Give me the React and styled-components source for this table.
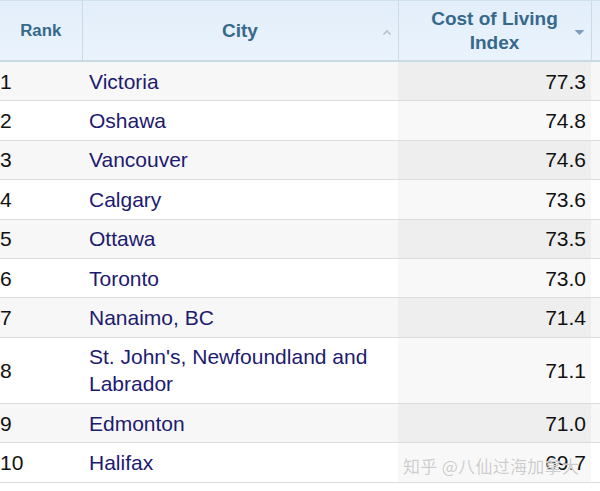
import styled, { createGlobalStyle } from "styled-components";

const GlobalStyle = createGlobalStyle`
  body {
    margin: 0;
    background: #ffffff;
    font-family: "Liberation Sans", Arial, sans-serif;
  }
`;

const rows = [
  { rank: 1, city: "Victoria", index: "77.3" },
  { rank: 2, city: "Oshawa", index: "74.8" },
  { rank: 3, city: "Vancouver", index: "74.6" },
  { rank: 4, city: "Calgary", index: "73.6" },
  { rank: 5, city: "Ottawa", index: "73.5" },
  { rank: 6, city: "Toronto", index: "73.0" },
  { rank: 7, city: "Nanaimo, BC", index: "71.4" },
  { rank: 8, city: "St. John's, Newfoundland and Labrador", index: "71.1" },
  { rank: 9, city: "Edmonton", index: "71.0" },
  { rank: 10, city: "Halifax", index: "69.7" },
];

const Wrapper = styled.div`
  position: relative;
  width: 600px;
  height: 491px;
  overflow: hidden;
`;

const Table = styled.table`
  width: 600px;
  border-collapse: collapse;
  table-layout: fixed;
`;

const HeadCell = styled.th`
  position: relative;
  height: 59px;
  padding: 0 6px;
  border-top: 1px solid #cfe0ee;
  border-bottom: 2px solid #cbd9e5;
  border-left: 1px solid #c8dbea;
  background: linear-gradient(#e2eefa, #eaf3fc);
  color: #37698b;
  font-size: ${(p) => (p.$small ? "16.8px" : "19px")};
  line-height: 24px;
  font-weight: bold;
  text-align: center;
  &:first-child {
    border-left: none;
  }
`;

const SortIcon = styled.svg`
  position: absolute;
  right: ${(p) => p.$right}px;
  top: 28px;
`;

const Row = styled.tr`
  background: ${(p) => (p.$odd ? "#f7f7f7" : "#ffffff")};
  border-bottom: 1.4px solid #dcdcdc;
`;

const Cell = styled.td`
  padding: 5.7px ${(p) => (p.$right ? "5px" : "0")} 5.7px ${(p) => p.$left || 0}px;
  font-size: 21px;
  line-height: 27px;
  color: ${(p) => (p.$link ? "#1d1a70" : "#111111")};
  text-align: ${(p) => (p.$right ? "right" : "left")};
  vertical-align: middle;
  background: ${(p) => (p.$sorted ? (p.$odd ? "#eeeeee" : "#f8f8f8") : "transparent")};
`;

const Watermark = styled.div`
  position: absolute;
  left: 403px;
  top: 453px;
  font-family: "Noto Sans CJK SC", sans-serif;
  font-size: 17px;
  color: rgba(195, 195, 195, 0.85);
  text-shadow: 0 0 1px #ffffff, 0 0 1px #ffffff;
  letter-spacing: 0.3px;
`;

export default function App() {
  return (
    <Wrapper>
      <GlobalStyle />
      <Table>
        <colgroup>
          <col style={{ width: 82 }} />
          <col style={{ width: 316 }} />
          <col style={{ width: 193 }} />
          <col style={{ width: 9 }} />
        </colgroup>
        <thead>
          <tr>
            <HeadCell $small>Rank</HeadCell>
            <HeadCell>
              City
              <SortIcon $right={6} width="10" height="7" viewBox="0 0 10 7">
                <path d="M1.5 5.5 L5 2 L8.5 5.5" fill="none" stroke="#b5c4cf" strokeWidth="1.6" />
              </SortIcon>
            </HeadCell>
            <HeadCell>
              Cost of Living
              <br />
              Index
              <SortIcon $right={6} width="11" height="7" viewBox="0 0 11 7">
                <path d="M0.5 1 L10.5 1 L5.5 6 Z" fill="#7f9dbd" />
              </SortIcon>
            </HeadCell>
            <HeadCell />
          </tr>
        </thead>
        <tbody>
          {rows.map((r, i) => {
            const odd = i % 2 === 0;
            return (
              <Row key={r.rank} $odd={odd}>
                <Cell>{r.rank}</Cell>
                <Cell $link $left={7}>
                  {r.city}
                </Cell>
                <Cell $right $sorted $odd={odd}>
                  {r.index}
                </Cell>
                <Cell />
              </Row>
            );
          })}
        </tbody>
      </Table>
      <Watermark>知乎 @八仙过海加拿大</Watermark>
    </Wrapper>
  );
}
